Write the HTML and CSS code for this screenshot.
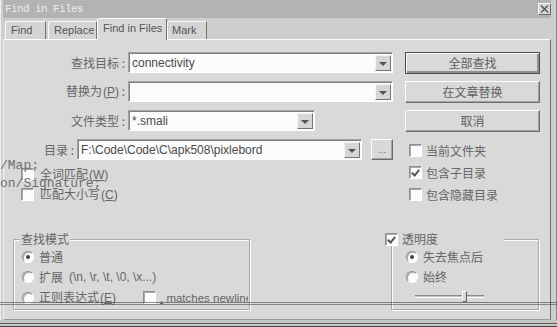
FILE: index.html
```html
<!DOCTYPE html>
<html lang="zh-CN">
<head>
    <meta charset="UTF-8">
    <title>Find in Files</title>
    <link rel="stylesheet" href="styles.css">
</head>
<body>
    <div class="window">
        <div class="titlebar">
            <span class="title">Find in Files</span>
            <span class="close">
                <svg width="9" height="8" viewBox="0 0 9 8"><path d="M1 0.5 L8 7.5 M8 0.5 L1 7.5" stroke="#555" stroke-width="1.4"/></svg>
            </span>
        </div>

        <div class="tabs">
            <div class="tab tab-find">Find</div>
            <div class="tab tab-replace">Replace</div>
            <div class="tab tab-files active">Find in Files</div>
            <div class="tab tab-mark">Mark</div>
        </div>

        <div class="panel">
            <div class="form">
                <div class="fields">
                    <div class="row">
                        <span class="label">查找目标 :</span>
                        <div class="combo wide"><span class="value">connectivity</span><span class="drop"></span></div>
                    </div>
                    <div class="row">
                        <span class="label">替换为<span class="key">(<u>P</u>)</span> :</span>
                        <div class="combo wide"><span class="value"></span><span class="drop"></span></div>
                    </div>
                    <div class="row">
                        <span class="label">文件类型 :</span>
                        <div class="combo short"><span class="value">*.smali</span><span class="drop"></span></div>
                    </div>
                    <div class="row">
                        <span class="label dir">目录 :</span>
                        <div class="combo dirbox"><span class="value">F:\Code\Code\C\apk508\pixlebord</span><span class="drop"></span></div>
                        <button class="btn browse">...</button>
                    </div>
                    <div class="checks left">
                        <div class="check"><span class="box"></span><span>全词匹配<span class="key">(<u>W</u>)</span></span></div>
                        <div class="check"><span class="box"></span><span>匹配大小写<span class="key">(<u>C</u>)</span></span></div>
                    </div>
                </div>

                <div class="actions">
                    <button class="btn default">全部查找</button>
                    <button class="btn">在文章替换</button>
                    <button class="btn">取消</button>
                    <div class="checks right">
                        <div class="check"><span class="box"></span>当前文件夹</div>
                        <div class="check"><span class="box checked"></span>包含子目录</div>
                        <div class="check"><span class="box"></span>包含隐藏目录</div>
                    </div>
                </div>
            </div>

            <div class="groups">
                <div class="group mode">
                    <span class="legend">查找模式</span>
                    <div class="radio"><span class="dot on"></span>普通</div>
                    <div class="radio">
                        <span class="dot"></span>扩展 <span class="latin">(\n, \r, \t, \0, \x...)</span>
                    </div>
                    <div class="radio-row">
                        <div class="radio regex"><span class="dot"></span><span>正则表达式<span class="key">(<u>E</u>)</span></span></div>
                        <div class="check newline"><span class="box"></span><span class="latin"><u>.</u> matches newline</span></div>
                    </div>
                </div>

                <div class="group opacity">
                    <span class="legend check"><span class="box checked"></span>透明度</span>
                    <div class="radio"><span class="dot on"></span>失去焦点后</div>
                    <div class="radio"><span class="dot"></span>始终</div>
                    <div class="slider">
                        <span class="track"></span>
                        <span class="thumb"></span>
                    </div>
                </div>
            </div>
        </div>

        <div class="frame-bottom"></div>

        <!-- editor text showing through the transparent dialog -->
        <div class="ghost">/Map;<br>on/Signature;</div>
        <div class="bleed"></div>
    </div>
</body>
</html>
```

FILE: styles.css
```css
* {
    margin: 0;
    padding: 0;
    box-sizing: border-box;
}

body {
    background-color: #c8c8c8;
    font-family: "Noto Sans CJK SC", "Noto Sans", sans-serif;
    font-size: 12px;
    color: #666666;
}

u {
    text-decoration: underline;
}

.latin {
    font-family: "Liberation Sans", Arial, sans-serif;
    font-size: 12px;
}

.key {
    font-family: "Liberation Sans", Arial, sans-serif;
    font-size: 12px;
    margin-left: 1px;
}

.window {
    position: relative;
    width: 557px;
    height: 327px;
    background-color: #cecece;
    padding: 0 6px 0 3px;
    box-shadow: inset 1px 0 #efefef, inset -1px 0 #8a8a8a;
    display: flex;
    flex-direction: column;
}

/* title bar */
.titlebar {
    height: 18px;
    background-color: #b3b3b3;
    display: flex;
    align-items: center;
    justify-content: space-between;
    padding: 0 0 0 2px;
}

.title {
    font-family: "Liberation Mono", monospace;
    font-size: 11px;
    letter-spacing: -0.6px;
    color: #ececec;
}

.close {
    width: 13px;
    height: 12px;
    background-color: #d6d6d6;
    border: 1px solid;
    border-color: #f6f6f6 #6a6a6a #6a6a6a #f6f6f6;
    display: flex;
    align-items: center;
    justify-content: center;
}

/* tabs */
.tabs {
    height: 21px;
    display: flex;
    align-items: flex-end;
    padding-left: 2px;
}

.tab {
    height: 18px;
    padding-left: 5px;
    background-color: #d4d4d4;
    border: 1px solid;
    border-bottom: none;
    border-color: #fafafa #707070 transparent #fafafa;
    border-radius: 2px 2px 0 0;
    font-family: "Liberation Sans", Arial, sans-serif;
    font-size: 11px;
    line-height: 17px;
    color: #555;
    white-space: nowrap;
}

.tab-find { width: 41px; margin-right: 2px; }
.tab-replace { width: 49px; }
.tab-files { width: 70px; }
.tab-mark { width: 40px; padding-left: 4px; }

.tab.active {
    height: 22px;
    margin-bottom: -1px;
    background-color: #d9d9d9;
    line-height: 19px;
    position: relative;
    z-index: 1;
}

/* main panel */
.panel {
    height: 281px;
    background-color: #d9d9d9;
    border-top: 1px solid #fdfdfd;
    border-left: 1px solid #f2f2f2;
    border-right: 1px solid #707070;
    border-bottom: 1px solid #9a9a9a;
}

.form {
    display: flex;
    padding-top: 12px;
}

.fields {
    width: 401px;
}

.row {
    display: flex;
    align-items: center;
    height: 21px;
    margin-bottom: 8px;
}

.label {
    width: 121px;
    margin-right: 3px;
    text-align: right;
    line-height: 14px;
    white-space: nowrap;
}

.label.dir {
    width: 70px;
}

.combo {
    height: 21px;
    background-color: #fbfbfb;
    border: 1px solid;
    border-color: #a4a4a4 #ffffff #ffffff #a4a4a4;
    box-shadow: inset 1px 1px #808080;
    display: flex;
    align-items: center;
    padding: 0 1px 0 3px;
}

.combo.wide { width: 265px; }
.combo.short { width: 187px; }
.combo.dirbox { width: 285px; }

.value {
    flex: 1;
    font-family: "Liberation Sans", Arial, sans-serif;
    font-size: 12px;
    color: #4a4a4a;
    white-space: nowrap;
    overflow: hidden;
}

.drop {
    width: 16px;
    height: 16px;
    margin-top: 1px;
    background-color: #d6d6d6;
    border: 1px solid;
    border-color: #f4f4f4 #767676 #767676 #f4f4f4;
    display: flex;
    align-items: center;
    justify-content: center;
}

.drop::after {
    content: "";
    border-left: 4px solid transparent;
    border-right: 4px solid transparent;
    border-top: 4px solid #555;
    margin-top: 1px;
}

.btn {
    font-family: "Noto Sans CJK SC", sans-serif;
    font-size: 12px;
    color: #606060;
    background-color: #d9d9d9;
    border: 1px solid;
    border-color: #fbfbfb #6c6c6c #6c6c6c #fbfbfb;
    box-shadow: inset -1px -1px #a2a2a2;
    height: 22px;
    line-height: 18px;
}

.btn.default {
    border-color: #4a4a4a;
    box-shadow: inset 1px 1px #fbfbfb, inset -2px -2px #8e8e8e;
}

.btn.browse {
    width: 22px;
    height: 21px;
    margin-left: 9px;
    font-family: "Liberation Sans", Arial, sans-serif;
    font-size: 10px;
    line-height: 15px;
    color: #666;
}

.actions {
    width: 135px;
    display: flex;
    flex-direction: column;
}

.actions .btn {
    margin-bottom: 7px;
}

/* checkboxes */
.checks {
    display: flex;
    flex-direction: column;
}

.checks.left {
    padding-left: 17px;
    gap: 7px;
}

.checks.right {
    margin-top: 5px;
    padding-left: 4px;
    gap: 9px;
}

.check {
    display: flex;
    align-items: center;
    height: 13px;
    gap: 6px;
    line-height: 14px;
    white-space: nowrap;
}

.checks.right .check {
    gap: 4px;
}

.box {
    flex: none;
    width: 13px;
    height: 13px;
    background-color: #fbfbfb;
    border: 1px solid;
    border-color: #909090 #ffffff #ffffff #909090;
    box-shadow: inset 1px 1px #a8a8a8;
    position: relative;
}

.box.checked::after {
    content: "";
    position: absolute;
    left: 3px;
    top: 1px;
    width: 3px;
    height: 6px;
    border-right: 2px solid #555;
    border-bottom: 2px solid #555;
    transform: rotate(40deg);
}

/* group boxes */
.groups {
    display: flex;
    margin-top: 38px;
}

.group {
    height: 71px;
    border: 1px solid #a9a9a9;
    box-shadow: 1px 1px #fdfdfd, inset 1px 1px #fdfdfd;
    display: flex;
    flex-direction: column;
}

.group.mode {
    width: 237px;
    margin-left: 9px;
    padding-left: 8px;
    gap: 8px;
}

.group.opacity {
    width: 148px;
    margin-left: auto;
    margin-right: 11px;
    padding-left: 14px;
    gap: 8px;
}

.legend {
    align-self: flex-start;
    height: 14px;
    margin: -8px 0 -3px -2px;
    padding: 0 1px;
    background-color: #d9d9d9;
    line-height: 14px;
}

.legend.check {
    width: 119px;
    margin-left: -21px;
    padding: 0;
    gap: 4px;
}

.radio {
    display: flex;
    align-items: center;
    height: 12px;
    gap: 5px;
    line-height: 14px;
    white-space: nowrap;
}

.radio .latin {
    margin-left: 1px;
}

.radio-row {
    display: flex;
    align-items: center;
}

.radio.regex {
    width: 121px;
}

.check.newline {
    width: 105px;
    gap: 4px;
    overflow: hidden;
}

.check.newline .latin {
    font-size: 11.5px;
}

.dot {
    flex: none;
    width: 12px;
    height: 12px;
    border-radius: 50%;
    background-color: #fbfbfb;
    border: 1px solid;
    border-color: #8c8c8c #ffffff #ffffff #8c8c8c;
    box-shadow: inset 1px 1px #b4b4b4;
    display: flex;
    align-items: center;
    justify-content: center;
}

.dot.on::after {
    content: "";
    width: 4px;
    height: 4px;
    border-radius: 50%;
    background-color: #404040;
}

.slider {
    position: relative;
    height: 11px;
    margin-left: 9px;
    width: 69px;
    display: flex;
    align-items: center;
}

.track {
    width: 69px;
    height: 3px;
    border-top: 1px solid #8a8a8a;
    border-bottom: 1px solid #fdfdfd;
    background-color: #c4c4c4;
}

.thumb {
    position: absolute;
    left: 47px;
    top: 0;
    width: 5px;
    height: 11px;
    background-color: #d6d6d6;
    border: 1px solid;
    border-color: #fbfbfb #5e5e5e #5e5e5e #fbfbfb;
}

/* window bottom edge */
.frame-bottom {
    height: 7px;
    margin: 0 -6px 0 -3px;
    background: linear-gradient(#c6c6c6 0 3px, #5a5a5a 3px 4px, #c6c6c6 4px 6px, #474747 6px 7px);
}

/* things behind the dialog that show through */
.ghost {
    position: absolute;
    left: 0;
    top: 157px;
    font-family: "Liberation Mono", monospace;
    font-size: 13px;
    line-height: 18px;
    color: #6e6e6e;
    pointer-events: none;
}

.bleed {
    position: absolute;
    left: 0;
    right: 0;
    top: 302px;
    height: 3px;
    border-top: 1px solid rgba(50, 50, 50, 0.55);
    border-bottom: 1px solid rgba(50, 50, 50, 0.5);
    pointer-events: none;
}
```
